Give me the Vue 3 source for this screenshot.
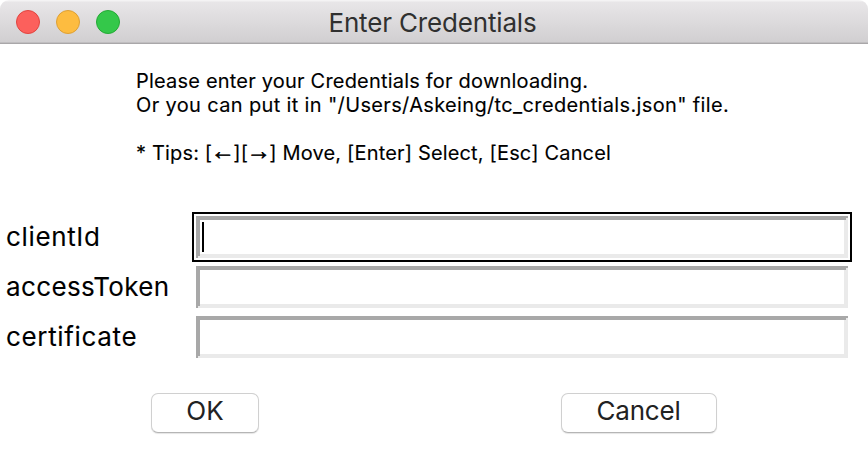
<script setup>
const fields = [
  { id: 'clientId', focused: true },
  { id: 'accessToken', focused: false },
  { id: 'certificate', focused: false },
]
</script>

<template>
  <div class="window">
    <header class="titlebar">
      <div class="lights">
        <span class="light close"></span>
        <span class="light minimize"></span>
        <span class="light zoom"></span>
      </div>
      <h1 class="title">Enter Credentials</h1>
    </header>
    <div class="message">
      <p class="line first">Please enter your Credentials for downloading.</p>
      <p class="line second">Or you can put it in "/Users/Askeing/tc_credentials.json" file.</p>
      <p class="line tips">* Tips: [<span class="arrow">←</span>][<span class="arrow">→</span>] Move, [Enter] Select, [Esc] Cancel</p>
    </div>
    <div class="form">
      <div v-for="field in fields" :key="field.id" class="row">
        <span class="label" :class="field.id">{{ field.id }}</span>
        <div class="ring" :class="{ focused: field.focused }">
          <div class="entry"><span v-if="field.focused" class="caret"></span></div>
        </div>
      </div>
    </div>
    <footer class="actions">
      <button class="button ok"><span>OK</span></button>
      <button class="button cancel"><span>Cancel</span></button>
    </footer>
  </div>
</template>

<style>
body { margin: 0; background: #fff; }
</style>

<style scoped>
.window {
  width: 868px;
  height: 462px;
  box-sizing: border-box;
  overflow: hidden;
  background: #fff;
  color: #000;
  font-family: Inter, "Liberation Sans", sans-serif;
}
.titlebar {
  height: 44px;
  box-sizing: border-box;
  display: grid;
  grid-template-columns: 1fr auto 1fr;
  align-items: center;
  border-radius: 9px 9px 0 0;
  border-bottom: 1px solid #a9a7a9;
  background: linear-gradient(#f5f4f5 0, #f3f2f3 1px, #e8e6e8 2px, #d1cfd1 42px, #c0bec0 42px);
}
.lights { display: flex; gap: 16px; padding-left: 16px; }
.light {
  width: 24px;
  height: 24px;
  box-sizing: border-box;
  border-radius: 50%;
  border: 1px solid;
}
.close { background: #fc605c; border-color: #e2443f; }
.minimize { background: #fdbc40; border-color: #dea034; }
.zoom { background: #34c84a; border-color: #24aa35; }
.title {
  margin: 0;
  padding: 3px 3px 0 0;
  color: #303030;
  font-size: 26px;
  line-height: 32px;
  font-weight: 400;
  letter-spacing: -0.16px;
  white-space: nowrap;
}
.message { padding: 25px 0 0 136px; height: 168px; box-sizing: border-box; -webkit-text-stroke: 0.12px #000; }
.line { margin: 0; font-size: 20px; line-height: 24px; white-space: pre; }
.first { letter-spacing: 0.2px; }
.second { letter-spacing: 0.35px; }
.tips { margin-top: 24px; letter-spacing: 0.16px; }
.arrow {
  margin-left: -1.5px;
  font-family: "Liberation Sans", sans-serif;
  font-size: 24px;
  line-height: 0;
  vertical-align: 1px;
  letter-spacing: -1.5px;
  -webkit-text-stroke: 0.7px #000;
}
.form { display: flex; flex-direction: column; }
.row { display: flex; align-items: center; height: 50px; }
.label { width: 186px; padding-left: 6px; font-size: 26px; line-height: 32px; white-space: nowrap; -webkit-text-stroke: 0.1px #000; }
.clientId { letter-spacing: 0.65px; }
.accessToken { letter-spacing: 0.36px; }
.certificate { letter-spacing: 0.65px; }
.ring { width: 660px; height: 50px; box-sizing: border-box; padding: 2px; border: 2px solid transparent; }
.focused { border-color: #000; }
.entry {
  height: 42px;
  box-sizing: border-box;
  padding: 6px;
  box-shadow: inset 2px 2px #a8a8a8, inset -2px -2px #eaeaea, inset 4px 4px #a8a8a8, inset -4px -4px #eaeaea;
}
.caret { display: block; width: 2px; height: 30px; background: #000; }
.actions { display: flex; padding: 31px 0 0 151px; }
.button {
  height: 40px;
  padding: 0 0 4px;
  border: 1px solid #d0d0d0;
  border-bottom-color: #b5b5b5;
  border-radius: 7px;
  background: #fff;
  box-shadow: 0 1px 1px #e5e5e5;
  color: #222;
  font: 400 26px/32px Inter, "Liberation Sans", sans-serif;
}
.ok { width: 108px; }
.cancel { width: 156px; padding-right: 1px; margin-left: 302px; letter-spacing: -0.2px; }
</style>
